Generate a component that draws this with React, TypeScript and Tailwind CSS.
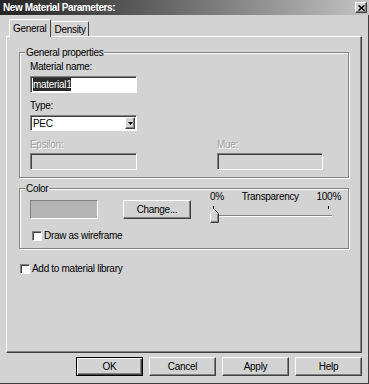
const sunken =
  "border border-t-[#808080] border-l-[#808080] border-r-white border-b-white shadow-[inset_1px_1px_0_#404040]";
const raised =
  "border border-t-white border-l-white border-r-[#404040] border-b-[#404040] shadow-[inset_-1px_-1px_0_#808080]";
const etched =
  "relative border border-[#808080] shadow-[inset_1px_1px_0_#fff,1px_1px_0_#fff]";
const disabledText = "text-[#a0a0a0] [text-shadow:1px_1px_0_#fff]";

const Checkbox = () => (
  <div className={`w-[10px] h-[10px] bg-white ${sunken}`} />
);

const Button = ({ label, isDefault }: { label: string; isDefault?: boolean }) => (
  <div
    className={
      isDefault
        ? "w-[67px] h-[19px] flex items-center justify-center border border-black shadow-[inset_1px_1px_0_#fff,inset_-1px_-1px_0_#404040,inset_-2px_-2px_0_#808080]"
        : `w-[67px] h-[19px] flex items-center justify-center ${raised}`
    }
  >
    {label}
  </div>
);

const SliderThumb = () => (
  <svg width="9" height="14" viewBox="0 0 9 14" className="absolute left-0 top-0">
    <polygon points="0.5,4.5 4.5,0.5 8.5,4.5 8.5,13.5 0.5,13.5" fill="#d3d3d3" />
    <polyline points="0.5,13 0.5,4.5 4.5,0.5" fill="none" stroke="#fff" />
    <polyline points="4.5,0.5 8.5,4.5 8.5,13.5 0.5,13.5" fill="none" stroke="#404040" />
    <polyline points="7.5,5 7.5,12.5 1,12.5" fill="none" stroke="#808080" />
  </svg>
);

export default function App() {
  return (
    <div className="w-[369px] h-[384px] bg-[#d3d3d3] flex flex-col overflow-hidden text-[10px] leading-[13px] tracking-[-0.3px] text-black font-['Liberation_Sans',Arial,sans-serif] shadow-[inset_-1px_-1px_0_#404040]">
      {/* title bar */}
      <div className="h-[15px] bg-linear-to-r from-[#242424] to-[#c4c4c4] flex items-center justify-between pl-[3px] pr-[2px]">
        <span className="font-bold text-white tracking-[-0.4px]">New Material Parameters:</span>
        <div className={`w-[12px] h-[11px] bg-[#d3d3d3] flex items-center justify-center ${raised}`}>
          <svg width="7" height="6" viewBox="0 0 7 6">
            <path d="M0.5 0.5 L6.5 5.5 M6.5 0.5 L0.5 5.5" stroke="#000" strokeWidth="1.6" />
          </svg>
        </div>
      </div>

      {/* tabs */}
      <div className="mt-[4px] h-[17px] flex items-end pl-[9px]">
        <div className="relative z-10 -mb-px h-[18px] bg-[#d3d3d3] border-t border-l border-white border-r border-r-[#404040] rounded-t-[2px] pl-[3px] pr-[4px] pt-[2px]">
          General
        </div>
        <div className="h-[15px] border-t border-white border-r border-r-[#404040] rounded-t-[2px] pl-[3px] pr-[2px] pt-[1px]">
          Density
        </div>
      </div>

      {/* tab panel */}
      <div className={`ml-[6px] w-[356px] h-[317px] ${raised}`}>
        <div className={`mt-[15px] ml-[12px] w-[330px] h-[126px] ${etched}`}>
          <span className="absolute -top-[7px] left-[5px] px-[1px] bg-[#d3d3d3]">
            General properties
          </span>
          <div className="pl-[10px] pt-[7px] flex flex-col">
            <span>Material name:</span>
            <div className={`mt-[3px] w-[107px] h-[17px] bg-white flex items-center px-[2px] ${sunken}`}>
              <span className="bg-[#2a2a2a] text-white">material1</span>
            </div>
            <span className="mt-[6px]">Type:</span>
            <div className={`mt-[3px] w-[107px] h-[16px] bg-white flex items-center justify-between pl-[2px] pr-px ${sunken}`}>
              <span>PEC</span>
              <div className={`w-[10px] h-[12px] bg-[#d3d3d3] flex items-center justify-center ${raised}`}>
                <svg width="5" height="3" viewBox="0 0 5 3">
                  <polygon points="0,0 5,0 2.5,3" fill="#000" />
                </svg>
              </div>
            </div>
            <div className="mt-[7px] flex">
              <div className="flex flex-col">
                <span className={disabledText}>Epsilon:</span>
                <div className={`mt-[2px] w-[107px] h-[17px] ${sunken}`} />
              </div>
              <div className="ml-[80px] flex flex-col">
                <span className={disabledText}>Mue:</span>
                <div className={`mt-[2px] w-[106px] h-[17px] ${sunken}`} />
              </div>
            </div>
          </div>
        </div>

        <div className={`mt-[10px] ml-[12px] w-[330px] h-[61px] ${etched}`}>
          <span className="absolute -top-[7px] left-[5px] px-[1px] bg-[#d3d3d3]">Color</span>
          <div className="pl-[10px] pt-px flex">
            <div className="mt-[10px] flex flex-col">
              <div className="flex">
                <div className="w-[68px] h-[19px] bg-[#b4b4b4] border border-t-[#808080] border-l-[#808080] border-r-white border-b-white" />
                <div className={`ml-[25px] w-[68px] h-[19px] flex items-center justify-center ${raised}`}>
                  Change...
                </div>
              </div>
              <div className="mt-[10px] ml-[2px] flex items-center gap-[2px]">
                <Checkbox />
                <span>Draw as wireframe</span>
              </div>
            </div>
            <div className="ml-[19px] w-[131px] flex flex-col">
              <div className="h-[13px] flex justify-between">
                <span>0%</span>
                <span>Transparency</span>
                <span>100%</span>
              </div>
              <div className="mt-[3px] ml-[3px] w-[116px] h-[3px] flex justify-between">
                <div className="w-px h-[3px] bg-black" />
                <div className="w-px h-[3px] bg-black" />
              </div>
              <div className="relative h-[14px]">
                <div className="mt-[6px] ml-[3px] w-[119px] h-[2px] border-t border-t-[#808080] border-b border-b-white" />
                <SliderThumb />
              </div>
            </div>
          </div>
        </div>

        <div className="mt-[13px] ml-[13px] flex items-center gap-[2px]">
          <Checkbox />
          <span>Add to material library</span>
        </div>
      </div>

      {/* buttons */}
      <div className="mt-[4px] flex justify-end gap-[6px] pr-[7px]">
        <Button label="OK" isDefault />
        <Button label="Cancel" />
        <Button label="Apply" />
        <Button label="Help" />
      </div>
    </div>
  );
}
